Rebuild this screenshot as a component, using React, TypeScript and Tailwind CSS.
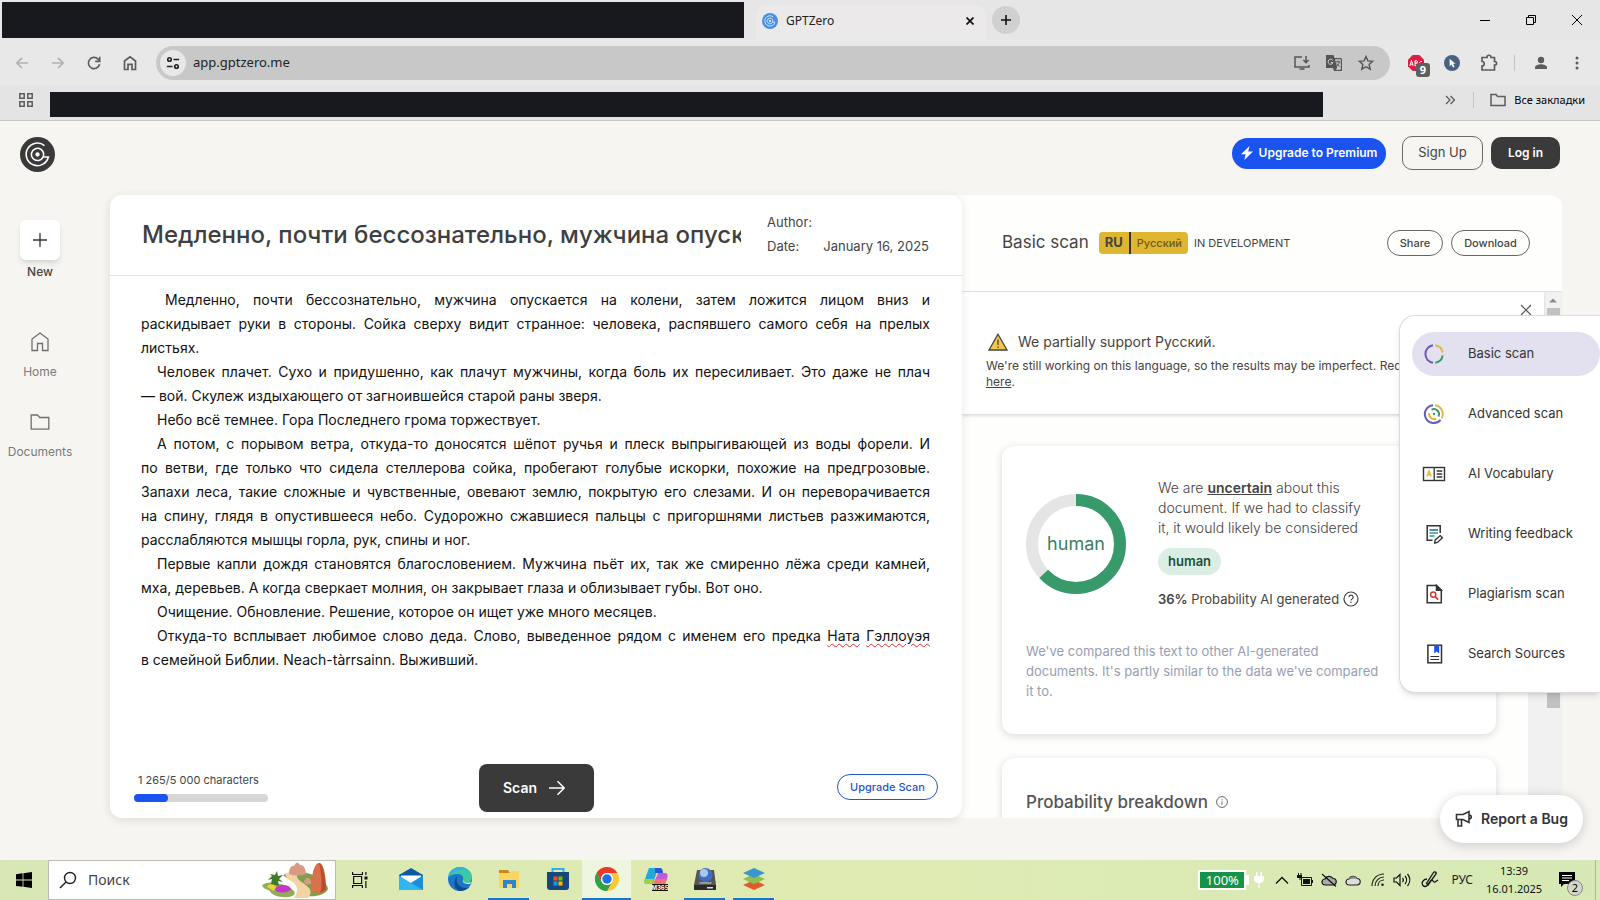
import { useState } from 'react';
import type { ReactNode } from 'react';

type IconProps = { className?: string };

const misspelled = 'underline decoration-[#e03131] decoration-wavy decoration-1 underline-offset-2';

// each paragraph is kept as its set lines, all but the last one run to the full measure
const paragraphs: ReactNode[][] = [
  [
    'Медленно, почти бессознательно, мужчина опускается на колени, затем ложится лицом вниз и',
    'раскидывает руки в стороны. Сойка сверху видит странное: человека, распявшего самого себя на прелых',
    'листьях.',
  ],
  [
    'Человек плачет. Сухо и придушенно, как плачут мужчины, когда боль их пересиливает. Это даже не плач',
    '— вой. Скулеж издыхающего от загноившейся старой раны зверя.',
  ],
  ['Небо всё темнее. Гора Последнего грома торжествует.'],
  [
    'А потом, с порывом ветра, откуда-то доносятся шёпот ручья и плеск выпрыгивающей из воды форели. И',
    'по ветви, где только что сидела стеллерова сойка, пробегают голубые искорки, похожие на предгрозовые.',
    'Запахи леса, такие сложные и чувственные, овевают землю, покрытую его слезами. И он переворачивается',
    'на спину, глядя в опустившееся небо. Судорожно сжавшиеся пальцы с пригоршнями листьев разжимаются,',
    'расслабляются мышцы горла, рук, спины и ног.',
  ],
  [
    'Первые капли дождя становятся благословением. Мужчина пьёт их, так же смиренно лёжа среди камней,',
    'мха, деревьев. А когда сверкает молния, он закрывает глаза и облизывает губы. Вот оно.',
  ],
  ['Очищение. Обновление. Решение, которое он ищет уже много месяцев.'],
  [
    <>
      Откуда-то всплывает любимое слово деда. Слово, выведенное рядом с именем его предка{' '}
      <span className={misspelled}>Ната</span> <span className={misspelled}>Гэллоуэя</span>
    </>,
    'в семейной Библии. Neach-tàrrsainn. Выживший.',
  ],
];

/* ---------- icons ---------- */

function Spiral({ className }: IconProps) {
  return (
    <svg viewBox="0 0 36 36" className={className} fill="none" stroke="#fff" strokeWidth="1.6">
      <circle cx="18" cy="18" r="18" fill="currentColor" stroke="none" />
      <path d="M25.2 8.800A11.600 11.600 0 1 0 29.200 20.600H23.500" />
      <path d="M23.700 20.600A6.300 6.300 0 1 1 24.300 18c0 1-.2 1.800-.6 2.600" />
      <circle cx="18" cy="18" r="2.2" fill="#fff" stroke="none" />
    </svg>
  );
}

function BasicScanIcon() {
  return (
    <svg viewBox="0 0 24 24" className="size-6" fill="none" strokeWidth="2">
      <path d="M11 3.200a8.900 8.900 0 0 0 0 17.600" stroke="#6b5cb3" />
      <path d="M13.200 3.200a8.900 8.900 0 0 1 7.500 7.300" stroke="#e0b93c" />
      <path d="M20.700 13.400a8.900 8.900 0 0 1-7.500 7.400" stroke="#3a9a6e" />
    </svg>
  );
}

function AdvancedScanIcon() {
  return (
    <svg viewBox="0 0 24 24" className="size-6" fill="none" strokeWidth="2">
      <path d="M11 3.200a8.900 8.900 0 1 0 7.600 14.600" stroke="#6b5cb3" />
      <path d="M13.200 3.200a8.900 8.900 0 0 1 6.500 13" stroke="#e0b93c" />
      <path d="M9.500 7.700a5 5 0 0 1 6.800 6.800" stroke="#3a9a6e" />
      <path d="M7.200 11.200a5 5 0 0 0 7 5.400" stroke="#e0b93c" />
      <circle cx="12" cy="12" r="1.200" fill="#3a9a6e" stroke="none" />
    </svg>
  );
}

function VocabularyIcon() {
  return (
    <svg viewBox="0 0 24 24" className="size-6" fill="none" stroke="#333">
      <rect x="1.500" y="5.500" width="21" height="13" strokeWidth="1.400" />
      <path d="M12.200 5.500v13M14.700 9h5.600M14.700 12h5.600M14.700 15h5.600" strokeWidth="1.300" />
      <path d="m4.800 14.500 2.200-5.500 2.200 5.500M5.700 12.800h2.600" stroke="#e0b93c" strokeWidth="1.400" />
    </svg>
  );
}

function WritingIcon() {
  return (
    <svg viewBox="0 0 24 24" className="size-6" fill="none" stroke="#333" strokeWidth="1.500">
      <path d="M10.500 18.300H5.200V3.700h13v7.300" />
      <path d="M7.500 8h8.500" stroke="#3276b1" strokeWidth="1.700" />
      <path d="M7.500 11h8.500M7.500 14h5" stroke="#3a9a6e" strokeWidth="1.700" />
      <path d="m12.700 21 .4-2.800 5.100-4.600 2.200 2.200-4.900 4.600z" strokeWidth="1.400" />
    </svg>
  );
}

function PlagiarismIcon() {
  return (
    <svg viewBox="0 0 24 24" className="size-6" fill="none" stroke="#333" strokeWidth="1.500">
      <path d="M14.500 3.500H5.200v17.300h14.100V8.200z" />
      <path d="M14.500 3.500v4.700h4.800z" fill="#333" />
      <circle cx="11.200" cy="12.600" r="2.600" stroke="#cf3a2c" />
      <path d="m13.200 14.600 3 3" stroke="#cf3a2c" strokeWidth="1.800" />
    </svg>
  );
}

function SourcesIcon() {
  return (
    <svg viewBox="0 0 24 24" className="size-6" fill="none" stroke="#333" strokeWidth="1.500">
      <rect x="5.900" y="3.200" width="13.600" height="17.600" />
      <path d="M12.200 3h5v8.600l-2.500-2-2.500 2z" fill="#1a4ff0" stroke="none" />
      <path d="M8.400 14.500h8.800M8.400 17.500h8.800" strokeWidth="1.200" />
    </svg>
  );
}

const scanItems = [
  { label: 'Basic scan', icon: <BasicScanIcon /> },
  { label: 'Advanced scan', icon: <AdvancedScanIcon /> },
  { label: 'AI Vocabulary', icon: <VocabularyIcon /> },
  { label: 'Writing feedback', icon: <WritingIcon /> },
  { label: 'Plagiarism scan', icon: <PlagiarismIcon /> },
  { label: 'Search Sources', icon: <SourcesIcon /> },
];

/* ---------- browser ---------- */

function TabStrip() {
  return (
    <div className="flex h-10 items-stretch bg-[#e6e6e6]">
      <div className="mt-0.5 mb-0.5 ml-0.5 w-[742px] shrink-0 bg-[#18191e]" />
      <div className="mt-1.5 ml-3 flex w-[230px] items-center rounded-t-lg bg-[#ebe9ea] px-1.5 pb-1">
        <Spiral className="size-4 text-[#4a90e2]" />
        <span className="ml-2 flex-1 text-xs text-[#222]">GPTZero</span>
        <button type="button" aria-label="Close tab" className="mr-0.5 grid size-4 place-items-center">
          <svg viewBox="0 0 8 8" className="size-2" stroke="#111" strokeWidth="1.700">
            <path d="m.5.5 7 7m0-7-7 7" />
          </svg>
        </button>
      </div>
      <button
        type="button"
        aria-label="New tab"
        className="ml-1.5 grid size-7 place-items-center self-center rounded-full bg-[#d0d0d0]"
      >
        <svg viewBox="0 0 10 10" className="size-2.5" stroke="#111" strokeWidth="1.600">
          <path d="M5 0v10M0 5h10" />
        </svg>
      </button>
      <div className="ml-auto flex">
        <button type="button" aria-label="Minimize" className="grid w-[46px] place-items-center">
          <svg viewBox="0 0 10 10" className="size-2.5" stroke="#000">
            <path d="M0 5.500h10" />
          </svg>
        </button>
        <button type="button" aria-label="Restore" className="grid w-[46px] place-items-center">
          <svg viewBox="0 0 10 10" className="size-2.5" fill="none" stroke="#000">
            <path d="M.5 2.500h7v7h-7zM2.500 2.500v-2h7v7h-2" />
          </svg>
        </button>
        <button type="button" aria-label="Close" className="grid w-[46px] place-items-center">
          <svg viewBox="0 0 10 10" className="size-2.5" stroke="#000">
            <path d="m0 0 10 10M10 0 0 10" />
          </svg>
        </button>
      </div>
    </div>
  );
}

function Toolbar() {
  return (
    <div className="flex h-[46px] items-center bg-[#e8e8e8] pr-1">
      <div className="flex w-[156px] shrink-0 items-center gap-5 pl-3.5">
        <button type="button" aria-label="Back" className="size-4">
          <svg viewBox="0 0 16 16" fill="none" stroke="#b3b3b3" strokeWidth="1.700">
            <path d="M14 8H3M8 2.800 2.800 8 8 13.200" />
          </svg>
        </button>
        <button type="button" aria-label="Forward" className="size-4">
          <svg viewBox="0 0 16 16" fill="none" stroke="#b3b3b3" strokeWidth="1.700">
            <path d="M2 8h11M8 2.800 13.200 8 8 13.200" />
          </svg>
        </button>
        <button type="button" aria-label="Reload" className="size-4">
          <svg viewBox="0 0 16 16" fill="none" stroke="#5c5c5c" strokeWidth="1.700">
            <path d="M13.500 9.200A5.600 5.600 0 1 1 12 4.100L13.600 6" />
            <path d="M13.700 1.800v4.600H9.200" />
          </svg>
        </button>
        <button type="button" aria-label="Home page" className="size-4">
          <svg viewBox="0 0 16 16" fill="none" stroke="#5c5c5c" strokeWidth="1.700">
            <path d="M2.500 14.500V6L8 1.800 13.500 6v8.500H10V9.400H6v5.100z" />
          </svg>
        </button>
      </div>
      <div className="flex h-[34px] flex-1 items-center rounded-full bg-[#c8c8c8] pr-4 pl-1">
        <span className="grid size-[26px] place-items-center rounded-full bg-[#e8e8e8]">
          <svg viewBox="0 0 16 16" className="size-3.5" fill="none" stroke="#222" strokeWidth="1.900">
            <circle cx="4" cy="4" r="2" />
            <path d="M8.500 4H15M1 12h6.500" />
            <circle cx="12" cy="12" r="2" />
          </svg>
        </span>
        <input
          aria-label="Address"
          defaultValue="app.gptzero.me"
          className="min-w-0 flex-1 bg-transparent pl-[7px] text-[13px] text-[#222] outline-none"
        />
        <div className="flex items-center gap-4 text-[#555]">
          <svg viewBox="0 0 16 16" className="size-4" fill="none" stroke="currentColor" strokeWidth="1.500">
            <path d="M8 2H1v10h14v-2M12 1v6.500M9.300 5 12 7.600 14.700 5M5.500 14h5" />
          </svg>
          <svg viewBox="0 0 16 16" className="size-4">
            <path d="M0 0h7.500l1 3H15l1 1v12H8l-1-3H0z" fill="#555" />
            <path d="M9 4.200h5.800v10.600H9.600l1.600-2z" fill="#c8c8c8" />
            <path d="M6.600 5.200A2.500 2.500 0 1 0 7 7.600H4.800" fill="none" stroke="#d8d8d8" />
            <path d="M9.600 6.800h4.800M12 5.500v1.300M13.400 7c-.5 2-1.800 3.600-3.200 4.600M10.800 8.500c.7 1.400 1.600 2.400 2.800 3" fill="none" stroke="#555" />
          </svg>
          <svg viewBox="0 0 16 16" className="size-4" fill="none" stroke="currentColor" strokeWidth="1.400">
            <path d="m8 1.500 1.900 4.400 4.800.4-3.600 3.200 1.100 4.700L8 11.700l-4.200 2.500 1.100-4.700-3.600-3.200 4.800-.4z" />
          </svg>
        </div>
      </div>
      <div className="flex w-[206px] shrink-0 items-center pl-[18px]">
        <div className="relative">
          <svg viewBox="0 0 16 16" className="size-4">
            <path d="M4.700 0h6.600L16 4.700v6.600L11.300 16H4.700L0 11.300V4.700z" fill="#e01b44" />
            <path d="m1.800 11 1.700-5.500L5.200 11M2.400 9.200h2.200M7 5.700v5h1.400a1.300 1.300 0 0 0 0-2.600H7h1.200a1.200 1.200 0 0 0 0-2.400zM14 6.500a2 2 0 1 0 0 3.800" fill="none" stroke="#fff" />
          </svg>
          <span className="absolute top-2 left-2 grid h-3.5 w-3.5 place-items-center rounded-[3px] bg-[#5f5f5f] text-[11px] leading-3 font-bold text-white">
            9
          </span>
        </div>
        <svg viewBox="0 0 16 16" className="ml-5 size-4">
          <circle cx="8" cy="8" r="8" fill="#47617f" />
          <path d="m5.600 3.800.1 7.400 1.800-1.700 1.500 3 1.500-.7-1.400-3h2.400z" fill="#fff" />
        </svg>
        <svg viewBox="0 0 18 18" className="ml-5 size-[18px]" fill="none" stroke="#5c5c5c" strokeWidth="1.700">
          <path d="M2 3.500h5c0-3 4-3 4 0h3.500v4c2.800 0 2.800 3.600 0 3.600V16H2v-4c3 0 3-4.500 0-4.500z" />
        </svg>
        <span className="ml-4 h-4 w-px bg-[#c4c4c4]" />
        <svg viewBox="0 0 16 16" className="ml-[18px] size-4" fill="#5c5c5c">
          <circle cx="8" cy="5" r="3.200" />
          <path d="M2 14v-1.600C2 10.200 5.600 9.300 8 9.300s6 .9 6 3.100V14z" />
        </svg>
        <svg viewBox="0 0 16 16" className="ml-5 size-4" fill="#5c5c5c">
          <circle cx="8" cy="3" r="1.500" />
          <circle cx="8" cy="8" r="1.500" />
          <circle cx="8" cy="13" r="1.500" />
        </svg>
      </div>
    </div>
  );
}

function BookmarksBar() {
  return (
    <div className="flex h-[35px] items-center border-b border-[#c6c6c6] bg-[#e4e4e4] pt-0.5 pr-[15px] pl-[19px]">
      <svg viewBox="0 0 14 14" className="mb-2 size-3.5 shrink-0" fill="none" stroke="#5c5c5c" strokeWidth="1.500">
        <path d="M.8.8h4.400v4.400H.8zM8.800.8h4.400v4.400H8.800zM.8 8.800h4.400v4.400H.8zM8.800 8.800h4.400v4.400H8.800z" />
      </svg>
      <div className="ml-[17px] h-[25px] flex-1 bg-[#18191e]" />
      <div className="mb-2 flex w-[262px] shrink-0 items-center justify-end">
        <svg viewBox="0 0 10 10" className="size-2.5" fill="none" stroke="#5c5c5c" strokeWidth="1.300">
          <path d="m1 1 4 4-4 4M5.500 1l4 4-4 4" />
        </svg>
        <span className="ml-[18px] h-4 w-px bg-[#c4c4c4]" />
        <svg viewBox="0 0 16 14" className="ml-4 h-3.5 w-4" fill="none" stroke="#5c5c5c" strokeWidth="1.500">
          <path d="M1 1.500h5l1.600 2H15v9H1z" />
        </svg>
        <a href="#bookmarks" className="ml-2 text-[11px] leading-4 text-black">
          Все закладки
        </a>
      </div>
    </div>
  );
}

/* ---------- app ---------- */

function TopBar() {
  return (
    <header className="flex h-[74px] shrink-0 items-start justify-between pt-[15px] pr-10 pl-5">
      <a href="#home" aria-label="GPTZero" className="pt-px">
        <Spiral className="size-[35px] text-[#3a3a3a]" />
      </a>
      <div className="flex items-center">
        <button
          type="button"
          className="flex h-[31px] w-[154px] items-center justify-center gap-1.5 rounded-full bg-[#1a53f0] text-xs font-semibold text-white"
        >
          <svg viewBox="0 0 12 14" className="h-3.5 w-3 shrink-0" fill="currentColor">
            <path d="M8.500 0 0 8.200h4.600L3.400 14 12 5.600H7.200z" />
          </svg>
          <span className="whitespace-nowrap">Upgrade to Premium</span>
        </button>
        <button
          type="button"
          className="ml-4 h-[34px] w-[81px] rounded-[10px] border border-[#6b6b6b] text-[13px] text-[#444]"
        >
          Sign Up
        </button>
        <button
          type="button"
          className="ml-2 h-8 w-[69px] rounded-[10px] bg-[#3a3a3a] text-xs font-semibold text-white"
        >
          Log in
        </button>
      </div>
    </header>
  );
}

function Sidebar() {
  return (
    <nav className="flex w-[110px] shrink-0 flex-col pt-[25px] text-xs">
      <div className="flex w-20 flex-col items-center">
        <button type="button" className="flex flex-col items-center font-medium text-[#444]">
          <span className="grid size-10 place-items-center rounded-md bg-white shadow-md">
            <svg viewBox="0 0 14 14" className="size-3.5" stroke="#333" strokeWidth="1.300">
              <path d="M7 0v14M0 7h14" />
            </svg>
          </span>
          <span className="mt-1">New</span>
        </button>
        <a href="#home" className="mt-[52px] flex flex-col items-center text-[#7a7a7a]">
          <svg viewBox="0 0 20 20" className="size-5" fill="none" stroke="#6f6f6f" strokeWidth="1.300">
            <path d="M2 18.500V7L10 1l8 6v11.500h-5.500v-7h-5v7z" />
          </svg>
          <span className="mt-3">Home</span>
        </a>
        <a href="#documents" className="mt-8 flex flex-col items-center text-[#7a7a7a]">
          <svg viewBox="0 0 20 20" className="size-5" fill="none" stroke="#6f6f6f" strokeWidth="1.300">
            <path d="M1.200 3h6.300l2.200 2.500h9.100v11.700H1.200z" />
          </svg>
          <span className="mt-3">Documents</span>
        </a>
      </div>
    </nav>
  );
}

function Editor() {
  const [title, setTitle] = useState('Медленно, почти бессознательно, мужчина опускается на колени');
  const used = 1265;
  const limit = 5000;

  return (
    <section className="z-10 flex w-[852px] shrink flex-col rounded-xl bg-white shadow-[0_2px_10px_rgba(0,0,0,0.1)]">
      <div className="flex h-[81px] shrink-0 border-b border-[#e2e2e2] pr-[33px] pl-8">
        <input
          aria-label="Document title"
          value={title}
          onChange={(e) => setTitle(e.target.value)}
          className="min-w-0 flex-1 bg-transparent text-2xl font-medium text-[#3f3f3f] outline-none"
        />
        <div className="ml-[26px] w-[162px] shrink-0 pt-[15px] text-[13px] leading-6 text-[#444]">
          <div className="flex">
            <label htmlFor="author" className="w-14">
              Author:
            </label>
            <input id="author" className="min-w-0 flex-1 bg-transparent text-right outline-none" />
          </div>
          <div className="flex justify-between">
            <span>Date:</span>
            <span>January 16, 2025</span>
          </div>
        </div>
      </div>

      <div
        contentEditable
        suppressContentEditableWarning
        role="textbox"
        aria-label="Document text"
        spellCheck={false}
        className="min-h-0 flex-1 overflow-hidden px-8 pt-3 pl-[31px] text-justify text-sm leading-6 text-[#111] outline-none"
      >
        {paragraphs.map((lines, i) => (
          <div key={i} className={i === 0 ? 'indent-6' : 'indent-4'}>
            {lines.map((line, n) => (
              <p key={n} className="not-first:indent-0 not-last:[text-align-last:justify]">
                {line}
              </p>
            ))}
          </div>
        ))}
      </div>

      <div className="grid shrink-0 grid-cols-[1fr_auto_1fr] items-center px-6 pb-1.5">
        <div className="w-[134px]">
          <label htmlFor="usage" className="block pl-1 text-[11px] leading-4 whitespace-nowrap text-[#444]">
            1 265/5 000 characters
          </label>
          <div id="usage" className="mt-1.5 mb-0.5 h-2 overflow-hidden rounded-full bg-[#d6d6d6]">
            <div className="h-full rounded-r-full bg-[#1a53f0]" style={{ width: `${(used / limit) * 100}%` }} />
          </div>
        </div>
        <button
          type="button"
          className="flex h-12 w-[115px] items-center justify-center gap-3 rounded-lg bg-[#3a3a3a] pr-1 text-sm font-semibold text-white"
        >
          Scan
          <svg viewBox="0 0 16 16" className="size-4" fill="none" stroke="currentColor" strokeWidth="1.500">
            <path d="M0 8h15M8.500 1.200 15.200 8l-6.700 6.800" />
          </svg>
        </button>
        <button
          type="button"
          className="mb-0.5 h-[26px] w-[101px] justify-self-end rounded-full border border-[#2456c8] text-[11px] font-medium text-[#2456c8]"
        >
          Upgrade Scan
        </button>
      </div>
    </section>
  );
}

function Donut() {
  const circumference = 2 * Math.PI * 44;

  return (
    <div className="grid size-[100px] shrink-0 place-items-center">
      <svg viewBox="0 0 100 100" className="col-start-1 row-start-1 size-[100px] -rotate-90" fill="none" strokeWidth="12">
        <circle cx="50" cy="50" r="44" stroke="#e5e5e5" />
        <circle cx="50" cy="50" r="44" stroke="#38996b" strokeDasharray={`${circumference * 0.63} ${circumference}`} />
      </svg>
      <span className="col-start-1 row-start-1 text-lg text-[#3b7f60]">human</span>
    </div>
  );
}

function Results() {
  return (
    <section className="flex min-w-0 flex-1 flex-col overflow-hidden rounded-r-xl bg-[#fefefd]">
      <div className="flex h-[97px] shrink-0 items-center border-b border-[#e0e0e0] pr-8 pl-10 text-[#444]">
        <h2 className="text-[17px] whitespace-nowrap">Basic scan</h2>
        <div className="ml-2.5 flex h-[22px] items-center rounded bg-[#e0b52f] text-[#444]">
          <span className="px-1.5 text-[13px] font-bold">RU</span>
          <span className="h-full w-0.5 bg-[#333]" />
          <span className="px-1.5 text-[11px] font-medium text-[#6d5a1d]">Русский</span>
        </div>
        <span className="ml-1.5 text-[11px] whitespace-nowrap">IN DEVELOPMENT</span>
        <div className="ml-auto flex gap-2 text-[11px] font-medium">
          <button type="button" className="h-[26px] w-14 rounded-full border border-[#666]">
            Share
          </button>
          <button type="button" className="h-[26px] w-[79px] rounded-full border border-[#666]">
            Download
          </button>
        </div>
      </div>

      <div className="flex min-h-0 flex-1">
        <div className="flex min-w-0 flex-1 flex-col">
          <div className="z-[1] h-[122px] shrink-0 bg-white pt-2 pr-2 pl-6 text-[#444] shadow-[0_2px_3px_rgba(0,0,0,0.14)]">
            <div className="flex justify-end">
              <button type="button" aria-label="Dismiss" className="size-5 p-[5px]">
                <svg viewBox="0 0 10 10" stroke="#555" strokeWidth="1.200" className="size-2.5 overflow-visible">
                  <path d="m0 0 10 10M10 0 0 10" />
                </svg>
              </button>
            </div>
            <div className="mt-2.5 flex h-6 items-center gap-2.5">
              <svg viewBox="0 0 20 18" className="ml-0.5 h-[18px] w-5" fill="#f0c94a" stroke="#444" strokeWidth="1.300">
                <path d="M10 1.200 19 17H1z" />
                <path d="M10 6.500v5.500M10 13.500v1.600" />
              </svg>
              <span className="text-sm">We partially support Русский.</span>
            </div>
            <p className="mt-1 truncate text-xs leading-4">
              We&apos;re still working on this language, so the results may be imperfect. Request improvements
            </p>
            <p className="text-xs leading-4">
              <a href="#feedback" className="underline">
                here
              </a>
              .
            </p>
          </div>

          <div className="flex min-h-0 flex-1">
            <div className="min-w-0 flex-1 overflow-hidden pt-8 pr-8 pl-10">
              <div className="h-[288px] rounded-xl bg-white px-6 pt-8 shadow-[0_2px_8px_rgba(0,0,0,0.15)]">
                <div className="flex gap-8">
                  <div className="pt-4">
                    <Donut />
                  </div>
                  <div className="w-[212px] text-[#444]">
                    <p className="text-sm leading-5 font-light">
                      We are <b className="font-semibold underline">uncertain</b> about this document. If we had to
                      classify it, it would likely be considered
                    </p>
                    <span className="mt-2.5 inline-block h-[27px] rounded-full bg-[#daeee4] px-2.5 text-[13px] leading-[27px] font-semibold text-[#205040]">
                      human
                    </span>
                    <p className="mt-3.5 flex items-center gap-1 text-[13px] leading-5 whitespace-nowrap text-[#444]">
                      <span>
                        <b className="font-semibold">36%</b> Probability AI generated
                      </span>
                      <svg viewBox="0 0 16 16" className="size-4 shrink-0" fill="none" stroke="#444" strokeWidth="1.200">
                        <circle cx="8" cy="8" r="7" />
                        <path d="M5.900 6.200a2.100 2.100 0 1 1 2.900 2c-.6.3-.8.6-.8 1.400M8 10.800v1.300" />
                      </svg>
                    </p>
                  </div>
                </div>
                <p className="mt-8 w-[360px] text-[13px] leading-5 text-[#989eb0]">
                  We&apos;ve compared this text to other AI-generated documents. It&apos;s partly similar to the data
                  we&apos;ve compared it to.
                </p>
              </div>
              <div className="mt-6 h-40 rounded-xl bg-white px-6 pt-8 shadow-[0_2px_8px_rgba(0,0,0,0.15)]">
                <h3 className="flex items-center gap-2 text-[17px] leading-6 font-medium text-[#555]">
                  Probability breakdown
                  <svg viewBox="0 0 12 12" className="size-3" fill="none" stroke="#666">
                    <circle cx="6" cy="6" r="5.400" />
                    <path d="M6 5.400v3.400M6 3.200v1" />
                  </svg>
                </h3>
              </div>
            </div>
            <div className="w-4 shrink-0 bg-[#f0f0f0]" />
          </div>
        </div>

        <div className="flex w-[18px] shrink-0 flex-col items-center bg-[#f1f1f1]">
          <svg viewBox="0 0 8 8" className="my-1 size-2" fill="#8a8a8a">
            <path d="M0 6.500 4 2.500l4 4z" />
          </svg>
          <div className="h-[400px] w-[13px] bg-[#c1c1c1]" />
        </div>
      </div>
    </section>
  );
}

function ScanMenu() {
  const [active, setActive] = useState('Basic scan');

  return (
    <div className="absolute top-[194px] right-0 z-20 flex w-[201px] flex-col gap-4 rounded-l-2xl border border-r-0 border-[#dcdcdc] bg-white py-4 pl-3 shadow-md">
      {scanItems.map((item) => (
        <button
          key={item.label}
          type="button"
          onClick={() => setActive(item.label)}
          className={
            active === item.label
              ? 'flex h-11 items-center gap-[22px] rounded-full bg-[#e3e1f0] pl-2.5 text-[13px] text-[#333]'
              : 'flex h-11 items-center gap-[22px] rounded-full pl-2.5 text-[13px] text-[#333]'
          }
        >
          {item.icon}
          {item.label}
        </button>
      ))}
    </div>
  );
}

/* ---------- taskbar ---------- */

function SearchArt() {
  return (
    <svg viewBox="0 0 70 36" className="h-9 w-[70px]">
      <path d="M1 23c5-3 9-3 14-2 4 2 10 0 18 8 2 3 0 5-5 6-9 1-18-2-19-6-3-2-7-2-8-6z" fill="#8fae55" />
      <path d="M22 13c8-4 18-3 24-2 12 3 21 11 21 16-3 6-12 8-20 7-4-3-3-9-9-12-5-3-11-4-16-9z" fill="#7fa04a" />
      <path d="M24 11c8-1 12 0 12 3-1 4 8 7 12 12 3 3 1 8-1 10H33c3-5 5-10 0-15-4-3-9-5-9-10z" fill="#f3d3a4" />
      <path d="M28 12c0-5 2-9 5-8l2-3c3-1 4 3 5 2 3 0 5 5 5 9-5 2-12 2-17 0z" fill="#d99b83" />
      <path d="M50 28c0-9 2-27 8-27s7 18 7 27c-3 4-12 4-15 0z" fill="#d9714a" />
      <path d="M58 1c4 0 7 18 7 27l-6 3c3-8 1-22-1-30z" fill="#b94d30" />
      <path d="m10 22 1-5-4 1 4-4-2-2 5 1 2-4 1 5 5-1-4 4 4 3-5-1 1 5z" fill="#3f7a2c" />
      <path d="M6 25c2-4 7-3 9 0l-2 4z" fill="#f0cf3d" />
      <path d="M14 28c1-6 14-7 16-1-1 4-13 5-16 1z" fill="#c637c9" />
      <path d="M43 20c1-5 6-5 7-1v3c-3 1-6 0-7-2z" fill="#d99b83" />
    </svg>
  );
}

const taskApps: { name: string; state: 'idle' | 'open' | 'active'; art: ReactNode }[] = [
  {
    name: 'Mail',
    state: 'idle',
    art: (
      <>
        <path d="M0 8 12 1l12 7v4H0z" fill="#0c59a4" />
        <path d="M2 8.500h20v6L12 18 2 14z" fill="#fff" />
        <path d="M0 8.500 12 16l12-7.500V23H0z" fill="#33b5ee" />
        <path d="M12 16l12-7.500V23z" fill="#1a8fd8" />
      </>
    ),
  },
  {
    name: 'Edge',
    state: 'idle',
    art: (
      <>
        <circle cx="12" cy="12" r="12" fill="#1b75c9" />
        <path d="M0 11C1 4 6 0 12 0c7 0 12 5 12 10 0 4-3 6-6 6-3 0-4-1-3-3 1-3-1-6-5-6-5 0-9 2-10 4z" fill="#3fc8a4" />
        <path d="M0 11C1 4 6 0 12 0c4 0 7 2 8 4-6-2-15-1-20 7z" fill="#35b4dc" />
        <path d="M8.500 13c0 5 5 8 9 8 2 0 4-1 5-2-3 4-8 5-11 5C5 22 5 12 10 9c-1 1-1.500 2-1.500 4z" fill="#114a8b" />
        <path d="M14.800 13.500C14.500 16 18 17.500 22 17l1.500-2.500C20 17 15.500 16 14.800 13.500z" fill="#e4edba" />
      </>
    ),
  },
  {
    name: 'Explorer',
    state: 'open',
    art: (
      <>
        <path d="M2 3h9l2 3H2z" fill="#c58a17" />
        <path d="M2 6h11l2-2h7v17H2z" fill="#fcd462" />
        <path d="M6 21v-8h13v8h-4v-4h-5v4z" fill="#2d84cf" />
      </>
    ),
  },
  {
    name: 'Store',
    state: 'idle',
    art: (
      <>
        <path d="M6.500 6V2h11v4" fill="none" stroke="#2fb1e8" strokeWidth="2" />
        <path d="M1 5h22v15a3 3 0 0 1-3 3H4a3 3 0 0 1-3-3z" fill="#17477c" />
        <path d="M7.500 9.500h4v4h-4z" fill="#f05023" />
        <path d="M12.500 9.500h4v4h-4z" fill="#80ba00" />
        <path d="M7.500 14.500h4v4h-4z" fill="#00a3ee" />
        <path d="M12.500 14.500h4v4h-4z" fill="#feb800" />
      </>
    ),
  },
  {
    name: 'Chrome',
    state: 'active',
    art: (
      <>
        <circle cx="12" cy="12" r="12" fill="#fcc934" />
        <path d="M1.600 6A12 12 0 0 1 22.400 6H12a6 6 0 0 0-5.200 9z" fill="#e33b2e" />
        <path d="M1.600 6A12 12 0 0 0 12 24l5.200-9A6 6 0 0 1 6.800 15z" fill="#2da14c" />
        <circle cx="12" cy="12" r="6" fill="#fff" />
        <circle cx="12" cy="12" r="4.700" fill="#1a73e8" />
      </>
    ),
  },
  {
    name: 'M365',
    state: 'idle',
    art: (
      <>
        <path d="M5 1h9L9 17H3c-3 0-3-3-2-5z" fill="#24a8dc" />
        <path d="M1 12h9l-1.500 5H3c-3 0-3-3-2-5z" fill="#a6cf3c" />
        <path d="M11 1h5c2 0 3 2 3 5h-8z" fill="#2458d6" />
        <path d="M14 6h7c3 0 3 3 2 6l-3 7H9z" fill="#c45ad8" />
        <path d="M11 12h12l-3 7H9z" fill="#f2727a" />
        <path d="M8 17h16v7H8z" fill="#111" />
        <text x="16" y="23" fontSize="6" fontWeight="bold" textAnchor="middle" fill="#fff">
          M365
        </text>
      </>
    ),
  },
  {
    name: 'Disk',
    state: 'open',
    art: (
      <>
        <path d="M4 3h17l2 15H1z" fill="#555" />
        <path d="M1 18h22v5H1z" fill="#2b2b2b" />
        <path d="M14 20h6v1.500h-6z" fill="#ddd" />
        <circle cx="12.500" cy="8" r="7" fill="#3f6fc4" />
        <circle cx="11" cy="6" r="4" fill="#a9c8f2" />
        <path d="M6 15h13l-1 2H7z" fill="#999" />
      </>
    ),
  },
  {
    name: 'Layers',
    state: 'open',
    art: (
      <>
        <path d="m12 13 11 5-11 5-11-5z" fill="#e05a2e" />
        <path d="m12 7 11 5-11 5-11-5z" fill="#8cc152" />
        <path d="m12 1 11 5-11 5L1 6z" fill="#3c95cf" />
      </>
    ),
  },
];

const slotStyles = {
  idle: 'border-transparent',
  open: 'border-[#1976c8]',
  active: 'border-[#1976c8] bg-[#eff6df]',
};

function Tray() {
  return (
    <div className="ml-auto flex h-full items-center font-['Noto_Sans',sans-serif]">
      <div className="flex items-center">
        <span className="grid h-5 w-12 place-items-center border-2 border-white bg-[#169249] text-[13px] leading-4 text-white">
          100%
        </span>
        <span className="h-2.5 w-[3px] bg-white" />
      </div>
      <svg viewBox="0 0 12 16" className="ml-1 h-4 w-3" fill="#fff">
        <path d="M3 0h1.500v4h3V0H9v4h2v4L8.500 11h-2v5h-1v-5h-2L1 8V4h2z" />
      </svg>
      <svg viewBox="0 0 14 8" className="ml-2.5 h-2 w-3.5" fill="none" stroke="#111" strokeWidth="1.300">
        <path d="m1 7.500 6-6 6 6" />
      </svg>
      <svg viewBox="0 0 16 14" className="ml-2 h-3.5 w-4">
        <path d="M4.500 4.500h10v8h-10z" fill="none" stroke="#111" />
        <path d="M6 6h7v5H6zM15 7h1v3h-1zM0 2h5v3H3.500v2h-1V5H0zM1 0h1v2H1zM3.500 0h1v2h-1z" fill="#111" />
      </svg>
      <svg viewBox="0 0 16 14" className="ml-2 h-3.5 w-4" fill="#aaa" stroke="#111" strokeWidth="1.200">
        <path d="M4 12a3 3 0 0 1 0-6 4.500 4.500 0 0 1 8-.5 3.200 3.200 0 0 1 0 6.500z" />
        <path d="m1 1 14 12.500" />
      </svg>
      <svg viewBox="0 0 16 14" className="ml-2 h-3.5 w-4" fill="#ddd" stroke="#222" strokeWidth="1.200">
        <path d="M4 12a3 3 0 0 1 0-6 4.500 4.500 0 0 1 8-.5 3.200 3.200 0 0 1 0 6.500z" />
        <path d="M4 6a4.500 4.500 0 0 1 8-.5z" fill="#888" stroke="none" />
      </svg>
      <svg viewBox="0 0 14 14" className="ml-2.5 size-3.5" fill="none" stroke="#222" strokeWidth="1.200">
        <path d="M1 13C1 6 6 1 13 1M4 13c0-5 4-9 9-9M7 13c0-3.500 2.500-6 6-6" />
        <circle cx="11.500" cy="11.800" r="1.300" fill="#222" stroke="none" />
      </svg>
      <svg viewBox="0 0 18 14" className="ml-2 h-3.5 w-[18px]" fill="none" stroke="#111" strokeWidth="1.200">
        <path d="M1 5h2.500L7 1.500v11L3.500 9H1zM9.500 5c1 1.200 1 2.800 0 4M12 3c2 2.300 2 5.700 0 8M14.500 1c3 3.600 3 8.400 0 12" />
      </svg>
      <svg viewBox="0 0 18 18" className="ml-2.5 size-[18px]" fill="none" stroke="#111" strokeWidth="1.300">
        <path d="M7 14 15 3c1-1.500-1.500-3-2.500-1.500L5.500 12.500zM6 8c-4 0-6 4-4 6.500C5 18 8 12 10 9M10 9c2-1 2 3 4 2l3-2" />
      </svg>
      <span className="ml-3 text-xs text-[#222]">РУС</span>
      <div className="ml-2 w-[66px] text-center text-[11px] leading-[18px] text-[#111]">
        <div>13:39</div>
        <div>16.01.2025</div>
      </div>
      <div className="relative ml-3">
        <svg viewBox="0 0 16 16" className="size-4">
          <path d="M0 0h16v12H5l-3 3v-3H0z" fill="#000" />
          <path d="M3 3.500h10M3 6h10M3 8.500h7" stroke="#fff" />
        </svg>
        <span className="absolute top-2 left-2 grid size-4 place-items-center rounded-full border border-[#888] bg-[#d4d8c8] text-[11px] leading-3 text-black">
          2
        </span>
      </div>
      <span className="ml-5 h-full w-[5px] border-l border-[#aeb98c]" />
    </div>
  );
}

function Taskbar() {
  return (
    <footer className="flex h-10 shrink-0 items-stretch bg-linear-to-r from-[#d8e7b4] via-[#e0ebb2] to-[#d6e9b6]">
      <button type="button" aria-label="Start" className="grid w-12 shrink-0 place-items-center">
        <svg viewBox="0 0 16 16" className="size-4" fill="#000">
          <path d="M0 2.200 6.600 1.300v6.300H0zM7.400 1.200 16 0v7.600H7.400zM0 8.400h6.600v6.400L0 13.900zM7.400 8.400H16V16l-8.600-1.200z" />
        </svg>
      </button>
      <div className="flex w-[288px] shrink-0 items-center border border-[#b9bdb2] bg-white pl-2.5">
        <svg viewBox="0 0 18 18" className="size-[18px] shrink-0" fill="none" stroke="#222" strokeWidth="1.400">
          <circle cx="11" cy="7" r="5.500" />
          <path d="M7 11 1 17" />
        </svg>
        <input
          aria-label="Поиск"
          placeholder="Поиск"
          className="min-w-0 flex-1 bg-transparent pl-[11px] font-['Noto_Sans',sans-serif] text-sm text-[#333] outline-none placeholder:text-[#444]"
        />
        <span className="mr-1 shrink-0">
          <SearchArt />
        </span>
      </div>
      <button type="button" aria-label="Task view" className="grid w-12 shrink-0 place-items-center">
        <svg viewBox="0 0 16 16" className="size-4" fill="none" stroke="#111" strokeWidth="1.200">
          <path d="M.6 0v2.500h9.800V0M.6 16v-2.500h9.800V16M1.600 4.500h8v7h-8zM13.900 0v3M13.900 9v7" />
          <path d="M12.500 4.500h3v3h-3z" fill="#111" stroke="none" />
        </svg>
      </button>
      <div className="flex pl-0.5">
        {taskApps.map((app) => (
          <button
            key={app.name}
            type="button"
            aria-label={app.name}
            className={app.state === 'active' ? 'flex w-[49px] justify-center' : 'flex w-[49px] justify-center px-1'}
          >
            <span className={`flex h-full w-full items-center justify-center border-b-2 ${slotStyles[app.state]}`}>
              <svg viewBox="0 0 24 24" className="size-6">
                {app.art}
              </svg>
            </span>
          </button>
        ))}
      </div>
      <Tray />
    </footer>
  );
}

export default function App() {
  return (
    <div className="flex h-screen flex-col overflow-hidden bg-[#f6f5f2] font-['Inter',sans-serif]">
      <div className="shrink-0 font-['Noto_Sans',sans-serif]">
        <TabStrip />
        <Toolbar />
        <BookmarksBar />
      </div>

      <div className="relative flex min-h-0 flex-1 flex-col">
        <TopBar />
        <div className="flex min-h-0 flex-1 pb-[42px]">
          <Sidebar />
          <main className="mr-[38px] flex min-w-0 flex-1 rounded-xl bg-[#fefefd]">
            <Editor />
            <Results />
          </main>
        </div>
        <ScanMenu />
        <button
          type="button"
          className="absolute right-[17px] bottom-[17px] z-30 flex h-12 w-[143px] items-center justify-center gap-2 rounded-full bg-white text-sm font-semibold whitespace-nowrap text-[#333] shadow-[0_2px_12px_rgba(0,0,0,0.18)]"
        >
          <svg viewBox="0 0 18 18" className="size-[18px] shrink-0" fill="none" stroke="#333" strokeWidth="1.600">
            <path d="M1.500 4.500h6.500l6-3v11l-6-3H1.500zM3 9.500V16h3.500V9.500M14 5c3 0 3 4 0 4" />
          </svg>
          Report a Bug
        </button>
      </div>

      <Taskbar />
    </div>
  );
}
